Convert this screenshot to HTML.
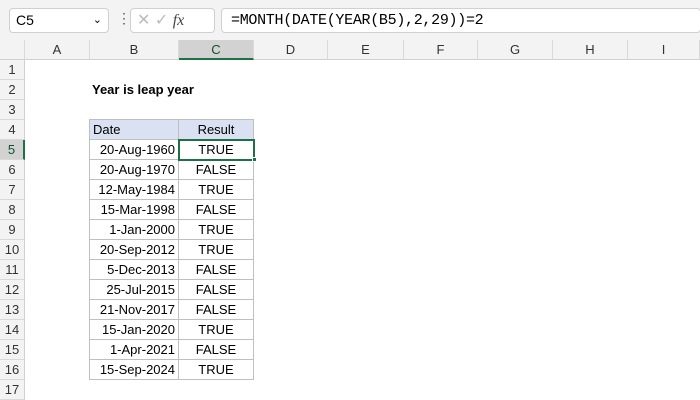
<!DOCTYPE html><html><head><style>
body{margin:0;width:700px;height:400px;overflow:hidden;background:#fff;font-family:"Liberation Sans",sans-serif;position:relative}
.a{position:absolute;box-sizing:border-box}
.ch{top:40px;height:20px;background:#f3f3f3;border-right:1px solid #d9d9d9;border-bottom:1px solid #d0d0d0;font-size:13px;color:#333;text-align:center;line-height:20px}
.rh{left:0;width:25px;height:20px;background:#f3f3f3;border-bottom:1px solid #d9d9d9;border-right:1px solid #d0d0d0;font-size:13px;color:#333;text-align:center;line-height:20px}
.c{height:20px;font-size:13px;line-height:20px;color:#000;border-right:1px solid #bfbfbf;border-bottom:1px solid #bfbfbf}
</style></head><body>
<div class="a" style="left:0;top:0;width:700px;height:40px;background:#f3f3f3"></div>
<div class="a" style="left:9px;top:8px;width:100px;height:25px;background:#fff;border:1px solid #d0d0d0;border-radius:4px;font-size:14px;line-height:23px;padding-left:6px">C5<span style="position:absolute;right:6px;top:0;font-size:11px">&#8964;</span></div>
<div class="a" style="left:117px;top:10px;font-size:14px;color:#555">&#8942;</div>
<div class="a" style="left:130px;top:8px;width:85px;height:25px;background:#fff;border:1px solid #d0d0d0;border-radius:4px;color:#bbb;font-size:16px;line-height:23px;padding-left:6px">&#10005; &#10003; <i style="color:#444;font-family:'Liberation Serif',serif">fx</i></div>
<div class="a" style="left:221px;top:8px;width:480px;height:25px;background:#fff;border:1px solid #d0d0d0;border-radius:4px;font-family:'Liberation Mono',monospace;font-size:15px;letter-spacing:-0.3px;line-height:23px;padding-left:9px">=MONTH(DATE(YEAR(B5),2,29))=2</div>
<div class="a ch" style="left:0;width:25px"></div>
<div class="a ch" style="left:25px;width:65px">A</div>
<div class="a ch" style="left:90px;width:89px">B</div>
<div class="a ch" style="left:179px;width:75px;background:#d2d2d2;border-bottom:2px solid #1e7145;color:#0f5132">C</div>
<div class="a ch" style="left:254px;width:74px">D</div>
<div class="a ch" style="left:328px;width:76px">E</div>
<div class="a ch" style="left:404px;width:74px">F</div>
<div class="a ch" style="left:478px;width:75px">G</div>
<div class="a ch" style="left:553px;width:75px">H</div>
<div class="a ch" style="left:628px;width:72px">I</div>
<div class="a rh" style="top:60px">1</div><div class="a rh" style="top:80px">2</div><div class="a rh" style="top:100px">3</div><div class="a rh" style="top:120px">4</div>
<div class="a rh" style="top:140px;background:#d2d2d2;border-right:2px solid #1e7145;color:#0f5132">5</div>
<div class="a rh" style="top:160px">6</div><div class="a rh" style="top:180px">7</div><div class="a rh" style="top:200px">8</div><div class="a rh" style="top:220px">9</div><div class="a rh" style="top:240px">10</div><div class="a rh" style="top:260px">11</div><div class="a rh" style="top:280px">12</div><div class="a rh" style="top:300px">13</div><div class="a rh" style="top:320px">14</div><div class="a rh" style="top:340px">15</div><div class="a rh" style="top:360px">16</div><div class="a rh" style="top:380px">17</div>
<div class="a" style="left:92px;top:80px;font-size:13px;font-weight:bold;line-height:20px">Year is leap year</div>
<div class="a" style="left:89px;top:119px;width:1px;height:261px;background:#bfbfbf"></div>
<div class="a" style="left:89px;top:119px;width:165px;height:1px;background:#bfbfbf"></div>
<div class="a c" style="left:90px;top:120px;width:89px;background:#d9e1f2;padding-left:3px">Date</div>
<div class="a c" style="left:179px;top:120px;width:75px;background:#d9e1f2;text-align:center">Result</div>
<div id="t"></div>
<script>
var d=[["20-Aug-1960","TRUE"],["20-Aug-1970","FALSE"],["12-May-1984","TRUE"],["15-Mar-1998","FALSE"],["1-Jan-2000","TRUE"],["20-Sep-2012","TRUE"],["5-Dec-2013","FALSE"],["25-Jul-2015","FALSE"],["21-Nov-2017","FALSE"],["15-Jan-2020","TRUE"],["1-Apr-2021","FALSE"],["15-Sep-2024","TRUE"]],h="";
d.forEach(function(r,i){var y=140+i*20;h+='<div class="a c" style="left:90px;top:'+y+'px;width:89px;text-align:right;padding-right:3px">'+r[0]+'</div><div class="a c" style="left:179px;top:'+y+'px;width:75px;text-align:center">'+r[1]+'</div>';});
document.getElementById("t").innerHTML=h;
</script>
<div class="a" style="left:178px;top:139px;width:77px;height:22px;border:2px solid #1e7145"></div>
<div class="a" style="left:252px;top:157px;width:5px;height:5px;background:#1e7145;border:1px solid #fff"></div>
</body></html>
